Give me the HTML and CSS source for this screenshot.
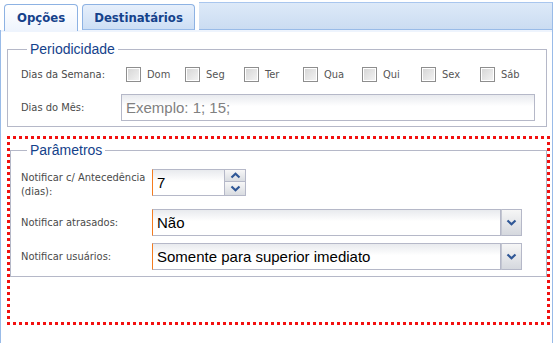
FILE: index.html
```html
<!DOCTYPE html>
<html lang="pt-BR">
<head>
  <meta charset="UTF-8">
  <title>Opções</title>
  <link rel="stylesheet" href="styles.css">
</head>
<body>
  <div class="panel">
    <!-- Abas -->
    <div class="strip">
      <div class="tab active">Opções</div>
      <div class="tab">Destinatários</div>
      <div class="strip-fill"></div>
    </div>
    <div class="strip-spacer"></div>

    <div class="panel-body">
      <!-- Periodicidade -->
      <fieldset class="group">
        <legend>Periodicidade</legend>
        <div class="row days">
          <span class="label">Dias da Semana:</span>
          <label class="check"><span class="box"></span>Dom</label>
          <label class="check"><span class="box"></span>Seg</label>
          <label class="check"><span class="box"></span>Ter</label>
          <label class="check"><span class="box"></span>Qua</label>
          <label class="check"><span class="box"></span>Qui</label>
          <label class="check"><span class="box"></span>Sex</label>
          <label class="check"><span class="box"></span>Sáb</label>
        </div>
        <div class="row month">
          <span class="label">Dias do Mês:</span>
          <input class="text month-input" type="text" placeholder="Exemplo: 1; 15;">
        </div>
      </fieldset>

      <!-- Parâmetros -->
      <div class="highlight">
        <fieldset class="group params">
          <legend>Parâmetros</legend>
          <div class="row advance">
            <span class="label wide">Notificar c/ Antecedência (dias):</span>
            <div class="spinner">
              <div class="text value required">7</div>
              <div class="spin-btns">
                <span class="spin up">
                  <svg width="11" height="7" viewBox="0 0 11 7"><polyline points="1.5,5.5 5.5,1.8 9.5,5.5" fill="none" stroke="#2f5796" stroke-width="2.2"/></svg>
                </span>
                <span class="spin down">
                  <svg width="11" height="7" viewBox="0 0 11 7"><polyline points="1.5,1.5 5.5,5.2 9.5,1.5" fill="none" stroke="#2f5796" stroke-width="2.2"/></svg>
                </span>
              </div>
            </div>
          </div>
          <div class="row select-row late">
            <span class="label wide">Notificar atrasados:</span>
            <div class="combo">
              <div class="text value required">Não</div>
              <span class="trigger">
                <svg width="11" height="7" viewBox="0 0 11 7"><polyline points="1.5,1.5 5.5,5.2 9.5,1.5" fill="none" stroke="#2f5796" stroke-width="2.2"/></svg>
              </span>
            </div>
          </div>
          <div class="row select-row users">
            <span class="label wide">Notificar usuários:</span>
            <div class="combo">
              <div class="text value required">Somente para superior imediato</div>
              <span class="trigger">
                <svg width="11" height="7" viewBox="0 0 11 7"><polyline points="1.5,1.5 5.5,5.2 9.5,1.5" fill="none" stroke="#2f5796" stroke-width="2.2"/></svg>
              </span>
            </div>
          </div>
        </fieldset>
      </div>
    </div>
  </div>
</body>
</html>
```

FILE: styles.css
```css
body {
  margin: 0;
  background-color: #fff;
  font-family: "DejaVu Sans Condensed", "DejaVu Sans", sans-serif;
  font-size: 11px;
  color: #4a4a4a;
}

.panel {
  width: 553px;
  height: 343px;
  box-sizing: border-box;
}

/* Abas */
.strip {
  display: flex;
  align-items: flex-end;
  height: 30px;
}

.tab {
  box-sizing: border-box;
  height: 26px;
  margin-left: 4px;
  padding: 0 11px;
  line-height: 25px;
  font-size: 13px;
  font-weight: bold;
  color: #15428b;
  border: 1px solid #8db2e3;
  border-bottom: 1px solid #99bbe8;
  border-radius: 4px 4px 0 0;
  background: linear-gradient(#e6effb, #cddff5);
}

.tab.active {
  height: 27px;
  margin-bottom: -1px;
  padding: 0 12px;
  border-bottom: none;
  background: linear-gradient(#ffffff, #eef4fd);
  position: relative;
}

.strip-fill {
  flex: 1;
  height: 28px;
  margin-left: 4px;
  box-sizing: border-box;
  border-top: 1px solid #a9c6ee;
  border-bottom: 1px solid #99bbe8;
  border-right: 1px solid #99bbe8;
  background: linear-gradient(#dde9f8, #cbdcf2);
}

.strip-spacer {
  height: 2px;
  background-color: #eef4fd;
  border-left: 1px solid #99bbe8;
  border-right: 1px solid #99bbe8;
}

.panel-body {
  height: 311px;
  box-sizing: border-box;
  padding: 9px 5px 0 6px;
  border-left: 1px solid #99bbe8;
  border-right: 1px solid #99bbe8;
}

/* Fieldsets */
.group {
  margin: 0;
  padding: 0 0 5px 13px;
  border: 1px solid #b5b8c8;
}

.group legend {
  margin-left: 6px;
  padding: 0 3px;
  font-family: "Liberation Sans", Arial, sans-serif;
  font-size: 14px;
  line-height: 16px;
  color: #15428b;
}

.row {
  display: flex;
  align-items: center;
}

.label {
  width: 105px;
  flex-shrink: 0;
}

.label.wide {
  width: 131px;
}

.days {
  height: 22px;
  margin-top: 6px;
}

.check {
  display: flex;
  align-items: center;
  width: 59px;
  color: #555;
}

.box {
  width: 13px;
  height: 13px;
  margin-right: 6px;
  border: 1px solid #8e8e8e;
  background: linear-gradient(135deg, #d4d4d4, #f4f4f4);
  box-shadow: inset 0 0 0 1px #fff;
}

.month {
  margin-top: 9px;
}

.month .label {
  width: 100px;
}

.text {
  box-sizing: border-box;
  height: 27px;
  border: 1px solid #b5b8c8;
  background: linear-gradient(#e8eaee, #ffffff 45%);
  font-family: "Liberation Sans", Arial, sans-serif;
  font-size: 15px;
  color: #000;
}

.month-input {
  width: 414px;
  padding: 0 4px;
}

.month-input::placeholder {
  color: #808080;
}

.required {
  border-left: 1px solid #f57c1f;
}

.value {
  padding: 0 4px;
  line-height: 25px;
}

/* Parâmetros */
.highlight {
  margin: 9px -3px 0 0;
  height: 189px;
  box-sizing: border-box;
  padding-top: 3px;
  border: 3px dotted #f21010;
}

.params {
  padding: 0 0 6px 10px;
}

.advance {
  align-items: flex-start;
  margin-top: 11px;
  height: 34px;
}

.advance .label {
  padding-top: 2px;
  line-height: 14px;
}

.spinner {
  display: flex;
}

.spinner .value {
  width: 73px;
}

.spin-btns {
  display: flex;
  flex-direction: column;
}

.spin {
  box-sizing: border-box;
  width: 21px;
  height: 13px;
  display: flex;
  align-items: center;
  justify-content: center;
  border: 1px solid #b5b8c8;
  border-left: none;
  background: linear-gradient(#f7f7f7, #d9dce1);
}

.spin.down {
  height: 14px;
  border-top: none;
}

.late {
  margin-top: 6px;
}

.users {
  margin-top: 7px;
}

.combo {
  display: flex;
}

.combo .value {
  width: 349px;
}

.trigger {
  box-sizing: border-box;
  width: 21px;
  height: 27px;
  display: flex;
  align-items: center;
  justify-content: center;
  border: 1px solid #b5b8c8;
  border-left: 1px solid #c4c7d2;
  background: linear-gradient(#f6f6f6, #d5d8de);
}
```
